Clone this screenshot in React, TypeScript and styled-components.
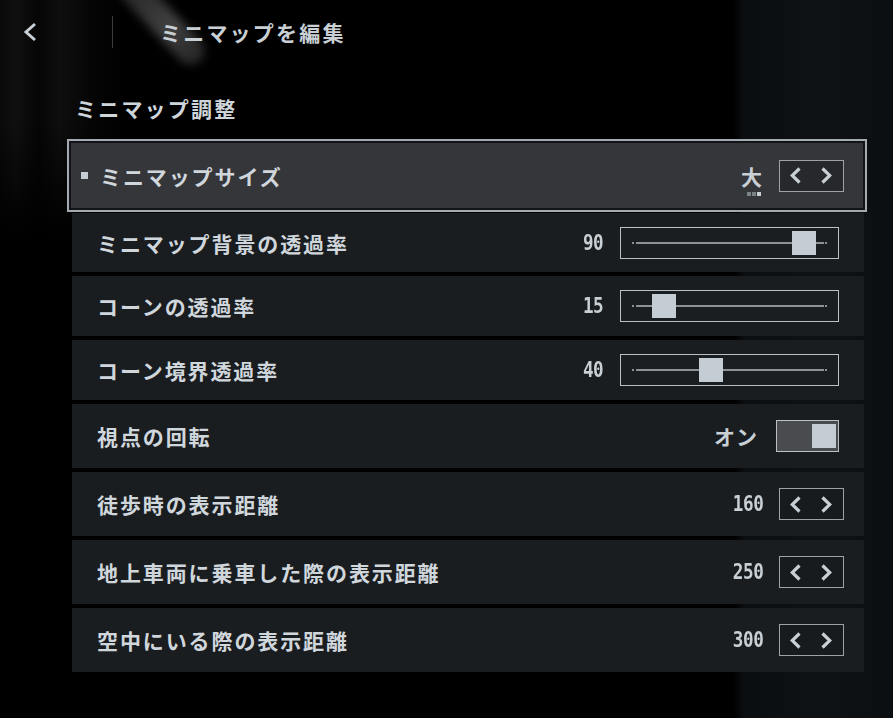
import React from 'react';
import styled, { createGlobalStyle } from 'styled-components';

const GlobalStyle = createGlobalStyle`
  html, body {
    margin: 0;
    padding: 0;
  }
  body {
    background: #000;
    font-family: "Noto Sans CJK JP", "Noto Sans", sans-serif;
    overflow: hidden;
  }
`;

const Screen = styled.div`
  position: relative;
  width: 893px;
  height: 718px;
  overflow: hidden;
  background:
    linear-gradient(90deg, rgba(0,0,0,0) 0, rgba(0,0,0,0) 734px, #0b0e10 744px, #0f1214 820px, #0c0f11 893px),
    linear-gradient(180deg, rgba(0,0,0,0) 0, rgba(0,0,0,0) 120px, #000 240px),
    linear-gradient(90deg, #090909 0, #101010 16px, #050505 38px, #0e0e0e 60px, #060606 88px, #000 125px);
  color: #cfd6db;

  /* soft light streak behind the header */
  &::before {
    content: '';
    position: absolute;
    left: 148px;
    top: -36px;
    width: 28px;
    height: 112px;
    border-radius: 14px;
    background: linear-gradient(180deg, rgba(70,70,70,0.5), rgba(85,85,85,0.75) 60%, rgba(60,60,60,0.6));
    transform: rotate(-43deg);
    transform-origin: center;
    filter: blur(5px);
  }
`;

const Content = styled.div`
  position: relative;
  display: flex;
  flex-direction: column;
`;

const Header = styled.header`
  display: flex;
  align-items: center;
  height: 64px;
  padding-left: 23px;
`;

const BackButton = styled.div`
  display: flex;
  align-items: center;
  width: 16px;
  height: 20px;
`;

const HeaderDivider = styled.div`
  width: 1px;
  height: 32px;
  margin-left: 73px;
  background: #3b3e41;
`;

const Title = styled.h1`
  margin: 0 0 0 47px;
  font-size: 21px;
  font-weight: 700;
  letter-spacing: 2.2px;
  line-height: 30px;
  color: #c9d0d5;
`;

const SectionHeading = styled.h2`
  margin: 29px 0 0 75px;
  font-size: 21px;
  font-weight: 700;
  letter-spacing: 2.2px;
  line-height: 30px;
  color: #cfd6db;
`;

const List = styled.div`
  display: flex;
  flex-direction: column;
  gap: 4px;
  width: 792px;
  margin: 16px 0 0 72px;
`;

const Row = styled.div<{ $h: number; $selected?: boolean }>`
  display: flex;
  align-items: center;
  box-sizing: border-box;
  height: ${p => p.$h}px;
  padding: 0 ${p => (p.$selected ? 21 : 20)}px 0 ${p => (p.$selected ? 12 : 25)}px;
  background: ${p => (p.$selected ? '#353639' : '#1a1d20')};
  ${p =>
    p.$selected &&
    `
    margin: 0 -3px -3px -5px;
    border: 2px solid #a3abb0;
    box-shadow: inset 0 0 0 2px #121417;
  `}
`;

const Bullet = styled.span`
  width: 7px;
  height: 7px;
  margin-right: 12px;
  background: #c6ced3;
`;

const Label = styled.span`
  flex: 1;
  font-size: 21px;
  font-weight: 700;
  letter-spacing: 1.9px;
  color: #d0d7dc;
  white-space: nowrap;
`;

const Value = styled.span<{ $gap: number }>`
  display: inline-block;
  margin-right: ${p => p.$gap}px;
  font-family: "DejaVu Sans Mono", "Liberation Mono", monospace;
  font-size: 21px;
  font-weight: 700;
  letter-spacing: -0.5px;
  color: #c8d0d5;
  transform: scaleX(0.84);
  transform-origin: right center;
`;

const TextValue = styled.span`
  position: relative;
  margin-right: 17px;
  font-size: 21px;
  font-weight: 700;
  color: #c8d0d5;
`;

const Dots = styled.span`
  position: absolute;
  left: 6px;
  bottom: -5px;
  display: flex;
  gap: 1px;
`;

const Dot = styled.span<{ $on?: boolean }>`
  width: 4px;
  height: 4px;
  background: ${p => (p.$on ? '#c8d0d5' : '#7c8387')};
`;

const Stepper = styled.div<{ $selected?: boolean }>`
  display: flex;
  align-items: center;
  justify-content: space-between;
  box-sizing: border-box;
  width: 65px;
  height: 32px;
  padding: 0 11px 0 10px;
  border: 1px solid #9ba3a8;
  background: ${p => (p.$selected ? '#27282b' : '#181b1e')};
`;

const SliderBox = styled.div`
  position: relative;
  box-sizing: border-box;
  width: 219px;
  height: 32px;
  margin-right: 5px;
  border: 1px solid #b9c1c6;
  background: #1b1e21;
`;

const Track = styled.div`
  position: absolute;
  left: 15px;
  right: 14px;
  top: 14px;
  height: 2px;
  background: #8a9297;
`;

const TrackEnd = styled.div<{ $side: 'left' | 'right' }>`
  position: absolute;
  ${p => p.$side}: 11px;
  top: 14px;
  width: 2px;
  height: 2px;
  background: #8a9297;
`;

const Thumb = styled.div`
  position: absolute;
  top: 3px;
  width: 24px;
  height: 24px;
  background: #c4cdd3;
`;

const ToggleBox = styled.div`
  display: flex;
  align-items: center;
  justify-content: flex-end;
  box-sizing: border-box;
  width: 63px;
  height: 32px;
  margin-right: 5px;
  padding-right: 2px;
  border: 1px solid #b9c1c6;
  background: #494b4e;
`;

const Knob = styled.div`
  width: 24px;
  height: 24px;
  background: #c4cdd3;
`;

const ToggleLabel = styled.span`
  margin-right: 18px;
  font-size: 21px;
  font-weight: 700;
  letter-spacing: 1px;
  color: #c8d0d5;
`;

const Chevron = ({ dir }: { dir: 'left' | 'right' }) => (
  <svg width="11" height="17" viewBox="0 0 11 17">
    <polyline
      points={dir === 'left' ? '9.5,1.5 2.2,8.5 9.5,15.5' : '1.5,1.5 8.8,8.5 1.5,15.5'}
      fill="none"
      stroke="#c8d0d5"
      strokeWidth="3.2"
    />
  </svg>
);

const Slider = ({ value }: { value: number }) => (
  <SliderBox>
    <TrackEnd $side="left" />
    <Track />
    <TrackEnd $side="right" />
    <Thumb style={{ left: 3 + value * 1.867 }} />
  </SliderBox>
);

const StepControl = ({ selected }: { selected?: boolean }) => (
  <Stepper $selected={selected}>
    <Chevron dir="left" />
    <Chevron dir="right" />
  </Stepper>
);

const sliders = [
  { label: 'ミニマップ背景の透過率', value: 90, h: 59 },
  { label: 'コーンの透過率', value: 15, h: 60 },
  { label: 'コーン境界透過率', value: 40, h: 60 },
];

const distances = [
  { label: '徒歩時の表示距離', value: 160 },
  { label: '地上車両に乗車した際の表示距離', value: 250 },
  { label: '空中にいる際の表示距離', value: 300 },
];

export default function App() {
  return (
    <>
      <GlobalStyle />
      <Screen>
        <Content>
          <Header>
            <BackButton>
              <svg width="14" height="20" viewBox="0 0 14 20">
                <polyline points="12,2 3,10 12,18" fill="none" stroke="#c9d0d5" strokeWidth="3" />
              </svg>
            </BackButton>
            <HeaderDivider />
            <Title>ミニマップを編集</Title>
          </Header>

          <SectionHeading>ミニマップ調整</SectionHeading>

          <List>
            <Row $h={73} $selected>
              <Bullet />
              <Label>ミニマップサイズ</Label>
              <TextValue>
                大
                <Dots>
                  <Dot />
                  <Dot />
                  <Dot $on />
                </Dots>
              </TextValue>
              <StepControl selected />
            </Row>

            {sliders.map(s => (
              <Row key={s.label} $h={s.h}>
                <Label>{s.label}</Label>
                <Value $gap={17}>{s.value}</Value>
                <Slider value={s.value} />
              </Row>
            ))}

            <Row $h={64}>
              <Label>視点の回転</Label>
              <ToggleLabel>オン</ToggleLabel>
              <ToggleBox>
                <Knob />
              </ToggleBox>
            </Row>

            {distances.map(d => (
              <Row key={d.label} $h={64}>
                <Label>{d.label}</Label>
                <Value $gap={16}>{d.value}</Value>
                <StepControl />
              </Row>
            ))}
          </List>
        </Content>
      </Screen>
    </>
  );
}
